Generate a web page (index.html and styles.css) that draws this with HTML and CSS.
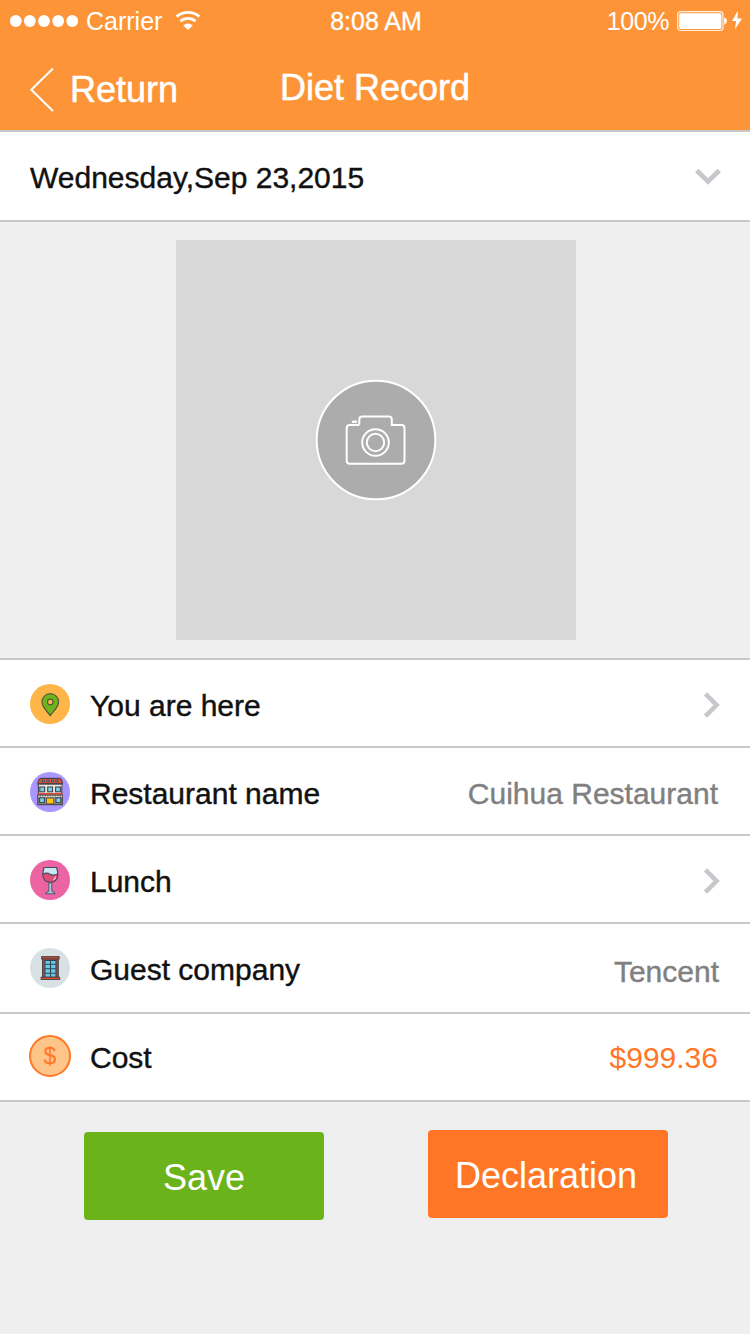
FILE: index.html
```
<!DOCTYPE html>
<html lang="en">
<head>
<meta charset="utf-8">
<title>Diet Record</title>
<link rel="stylesheet" href="styles.css">
</head>
<body>
<header class="header">
  <div class="status">
    <div class="status-left">
      <svg class="signal" width="68" height="14" viewBox="0 0 68 14" fill="#fff"><circle cx="5.8" cy="7" r="5.9"/><circle cx="19.8" cy="7" r="5.9"/><circle cx="34" cy="7" r="5.9"/><circle cx="48.2" cy="7" r="5.9"/><circle cx="62.2" cy="7" r="5.9"/></svg>
      <span class="carrier">Carrier</span>
      <svg class="wifi" width="26" height="20" viewBox="0 0 26 20" fill="none" stroke="#fff" stroke-width="2.8"><path d="M1.6 6.6Q6.5 2.4 13 2.4T24.4 6.6"/><path d="M5.3 11.2Q8.8 8.3 13 8.3T20.7 11.2"/><path d="M8.2 15.6Q13 11.6 17.8 15.6L13 20Z" fill="#fff" stroke="none"/></svg>
    </div>
    <time class="clock">8:08 AM</time>
    <div class="status-right">
      <span class="percent">100%</span>
      <svg class="battery" width="66" height="22" viewBox="0 0 66 22"><rect x=".7" y="1.7" width="45.2" height="18.8" rx="2.8" fill="none" stroke="#fff" stroke-opacity=".85" stroke-width="1.2"/><rect x="2.2" y="3.2" width="42.2" height="15.8" rx="1.6" fill="#fff"/><path d="M47.2 7.2Q50 8.3 50 11T47.2 15Z" fill="#fff"/><path d="M60.8 .8L55 10.9H59L58 19.2L65 8.4H60.5Z" fill="#fff"/></svg>
    </div>
  </div>
  <nav class="nav">
    <a class="back"><svg class="back-arrow" width="26" height="46" viewBox="0 0 26 46" fill="none" stroke="#fff" stroke-width="2"><path d="M24 1.5L2.3 22.7L24 44"/></svg><span class="back-label">Return</span></a>
    <h1 class="title">Diet Record</h1>
  </nav>
</header>

<section class="date">
  <span class="date-text">Wednesday,Sep 23,2015</span>
  <svg class="down" width="28" height="18" viewBox="0 0 28 18" fill="none" stroke="#c7c7cc" stroke-width="4.8"><path d="M2.8 2.5L14 13.4L25.2 2.5"/></svg>
</section>

<section class="photo">
  <div class="photo-box">
    <svg width="122" height="122" viewBox="0 0 122 122" fill="none" stroke="#fff" stroke-width="2"><circle cx="61" cy="61" r="59.3" fill="#acacac"/><path d="M44.3 45.7V40.5Q44.3 37.5 47.3 37.5H73.8Q76.8 37.5 76.8 40.5V45.9H86.5Q89.5 45.9 89.5 48.9V81.7Q89.5 84.7 86.5 84.7H34.7Q31.7 84.7 31.7 81.7V48.9Q31.7 45.9 34.7 45.9H44.3"/><path d="M38 42.7H40.8" stroke-width="2.6" stroke-linecap="round"/><circle cx="60.5" cy="63.5" r="13.3"/><circle cx="60.5" cy="63.5" r="8.7"/></svg>
  </div>
</section>

<main class="list">
  <div class="row">
    <svg class="icon" viewBox="0 0 40 40"><circle cx="20" cy="20" r="20" fill="#ffb547"/><path d="M20.2 31.6C17.8 27.8 12 23.6 12 18A8.3 8.3 0 0 1 28.6 18C28.6 23.6 22.8 27.8 20.2 31.6Z" fill="#6fb41b" stroke="#4d5a3c" stroke-width="1.2"/><circle cx="20.3" cy="18" r="2.8" fill="#ffb547" stroke="#4d5a3c" stroke-width="1.2"/></svg>
    <span class="label">You are here</span>
    <svg class="next" width="18" height="28" viewBox="0 0 18 28" fill="none" stroke="#c7c7cc" stroke-width="4.6"><path d="M2.5 2.8L13.6 14L2.5 25.2"/></svg>
  </div>
  <div class="row">
    <svg class="icon" viewBox="0 0 40 40"><circle cx="20" cy="20" r="20" fill="#aa96ff"/><path d="M8.4 12H31.8V22H8.4Z" fill="#e8e2df" stroke="#4b4b50" stroke-width="1.2"/><path d="M7.8 23H32.3V32.6H7.8Z" fill="#8f9094" stroke="#4b4b50" stroke-width="1.2"/><path d="M8 11.6Q8 6.4 12 6.4H28.6Q32.4 6.4 32.4 11.6Z" fill="#e0503c" stroke="#4f4045" stroke-width="1.1"/><path d="M9 13.4H32M8.4 24.2H32" stroke="#f0ece9" stroke-width="1.8" stroke-dasharray="1.4 1.1"/><path d="M7.6 21.9H32.6" stroke="#e0503c" stroke-width="1.8"/><path d="M7.6 23.1H32.6M7.6 12.1H32.6" stroke="#4b4b50" stroke-width=".9"/><g fill="#75d4ed" stroke="#45464a" stroke-width="1.1"><rect x="9.8" y="15" width="4.8" height="4.8"/><rect x="17.7" y="15" width="4.8" height="4.8"/><rect x="25.6" y="15" width="4.8" height="4.8"/><rect x="9.6" y="25.8" width="4.8" height="4.8"/><rect x="26" y="25.8" width="4.8" height="4.8"/><circle cx="13.4" cy="8.9" r="1.1"/><circle cx="17.9" cy="8.9" r="1.1"/><circle cx="22.3" cy="8.9" r="1.1"/><circle cx="26.8" cy="8.9" r="1.1"/></g><path d="M16.5 26H23.8V31.9H16.5Z" fill="#fcc60f" stroke="#5f5544"/></svg>
    <span class="label">Restaurant name</span>
    <span class="value">Cuihua Restaurant</span>
  </div>
  <div class="row">
    <svg class="icon" viewBox="0 0 40 40"><circle cx="20" cy="20" r="20" fill="#ed64a3"/><path d="M14 8H26.8L27.6 15H12.9Z" fill="#c9e8f2"/><path d="M12.8 14Q17 12.4 20 14.3T27.8 14Q28 22.3 20.4 22.3T12.8 14Z" fill="#e04d79"/><path d="M14 7.5H26.7Q27.8 11.5 27.8 15Q27.3 22.3 20.4 22.3T12.8 15Q12.8 11.5 14 7.5ZM13 14Q17 12.3 20 14.2T27.8 14" fill="none" stroke="#45485e" stroke-width="1.15"/><path d="M18.8 22.8H21.8V31.2L25 33V33.8H15.6V33L18.8 31.2Z" fill="#9fcbdb" stroke="#4a4c62" stroke-width=".9"/><path d="M25.6 16.5Q25.2 19 23.4 20" fill="none" stroke="#f6c8d9" stroke-width="1.3"/></svg>
    <span class="label">Lunch</span>
    <svg class="next" width="18" height="28" viewBox="0 0 18 28" fill="none" stroke="#c7c7cc" stroke-width="4.6"><path d="M2.5 2.8L13.6 14L2.5 25.2"/></svg>
  </div>
  <div class="row row-tall">
    <svg class="icon" viewBox="0 0 40 40"><circle cx="20" cy="20" r="20" fill="#d8e2e5"/><path d="M12.6 10.5H28.2V30H12.6Z" fill="#c24c3c" stroke="#443e40" stroke-width="1.1"/><path d="M14.9 12.4H26V29.4H14.9Z" fill="#67cbe7" stroke="#2f4659" stroke-width="1.1"/><path d="M20.5 12.5V29.5M14.9 16.3H26M14.9 20.8H26M14.9 25.3H26" stroke="#2f4659" stroke-width="1.1"/><rect x="11.6" y="8.6" width="17.6" height="2.3" fill="#b5503f" stroke="#513d3a" stroke-width=".9"/><rect x="11.1" y="29.2" width="18.6" height="2.3" fill="#e44d32" stroke="#443e40" stroke-width=".9"/></svg>
    <span class="label">Guest company</span>
    <span class="value value-low">Tencent</span>
  </div>
  <div class="row row-cost">
    <span class="coin">$</span>
    <span class="label">Cost</span>
    <span class="value price">$999.36</span>
  </div>
</main>

<footer class="actions">
  <button class="button save">Save</button>
  <button class="button declare">Declaration</button>
</footer>
</body>
</html>
```
FILE: styles.css
```
* { box-sizing: border-box; }
body {
  margin: 0;
  width: 750px;
  min-height: 1334px;
  background: #efefef;
  font-family: "Liberation Sans", Arial, sans-serif;
  font-size: 30px;
  line-height: 40px;
  color: #111;
}
svg { display: block; flex: none; }
span, h1, time { white-space: nowrap; }
.header {
  height: 132px;
  background: #fd9538;
  border-bottom: 2px solid #c8c8c8;
  color: #fff;
}
.status {
  height: 40px;
  display: grid;
  grid-template-columns: 1fr auto 1fr;
  font-size: 25px;
  line-height: 42px;
}
.status-left, .status-right { display: flex; }
.status-left { padding-left: 10px; }
.status-right { justify-content: flex-end; padding-right: 7px; }
.signal { margin-top: 14px; }
.carrier { margin-left: 8px; }
.wifi { margin: 10px 0 0 13px; }
.clock { padding-left: 2px; -webkit-text-stroke: .3px #fff; }
.battery { margin: 10px 0 0 8px; }
.percent { letter-spacing: -.4px; }
.nav {
  height: 90px;
  display: grid;
  grid-template-columns: 1fr auto 1fr;
  font-size: 36px;
  -webkit-text-stroke: .5px #fff;
}
.back { display: flex; padding-left: 29px; }
.back-arrow { margin-top: 27px; }
.back-label { margin: 30px 0 0 15px; }
.title { margin: 28px 0 0; font-size: 36px; font-weight: 400; }
.date {
  height: 90px;
  padding: 26px 28px 0 30px;
  display: flex;
  justify-content: space-between;
  background: #fff;
  border-bottom: 2px solid #c8c8c8;
  -webkit-text-stroke: .4px #111;
}
.down { margin-top: 10px; }
.photo {
  height: 438px;
  padding: 18px 0 0 176px;
  border-bottom: 2px solid #c8c8c8;
}
.photo-box {
  width: 400px;
  height: 400px;
  display: grid;
  place-items: center;
  background: #d8d8d8;
}
.row {
  height: 88px;
  padding: 24px 30px 0;
  display: flex;
  align-items: flex-start;
  background: #fff;
  border-bottom: 2px solid #c8c8c8;
}
.row-tall { height: 90px; }
.row-cost { padding-top: 22px; }
.icon { width: 40px; height: 40px; }
.coin {
  width: 42px;
  height: 42px;
  margin: -1px -1px 0;
  border: 2px solid #ff7726;
  border-radius: 50%;
  background: #ffc487;
  color: #ff7726;
  font-size: 23px;
  line-height: 39px;
  text-align: center;
}
.label { margin: 2px auto 0 20px; -webkit-text-stroke: .4px #111; }
.value { margin: 2px 2px 0 0; color: #808080; -webkit-text-stroke: .4px #808080; }
.value-low { margin: 4px 1px 0 0; }
.price { color: #ff7726; -webkit-text-stroke: 0; }
.next { margin: 7px -1px 0 0; }
.actions {
  display: flex;
  justify-content: space-between;
  align-items: flex-start;
  padding: 28px 82px 0 84px;
}
.button {
  width: 240px;
  height: 88px;
  padding: 4px 0 0;
  border: 0;
  border-radius: 4px;
  color: #fff;
  font: 36px/40px "Liberation Sans", Arial, sans-serif;
}
.save { margin-top: 2px; background: #6ab31b; }
.declare { padding-right: 4px; background: #ff7726; }
```
